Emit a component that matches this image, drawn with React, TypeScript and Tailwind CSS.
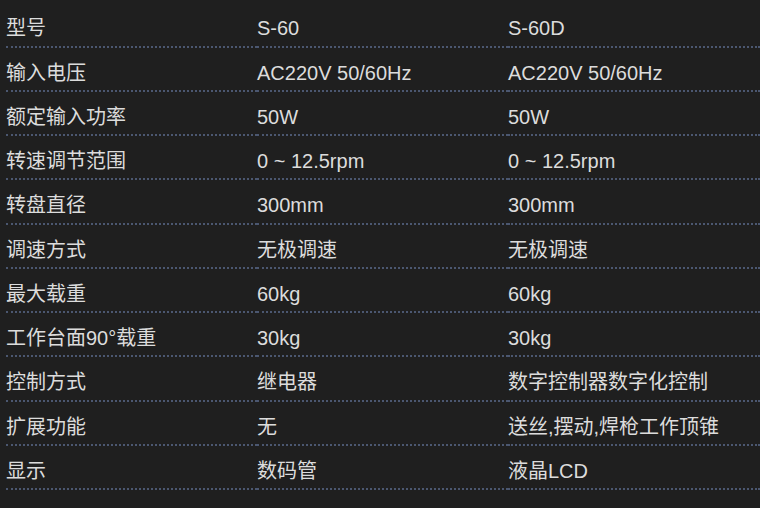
const rows: [string, string, string][] = [
  ['型号', 'S-60', 'S-60D'],
  ['输入电压', 'AC220V 50/60Hz', 'AC220V 50/60Hz'],
  ['额定输入功率', '50W', '50W'],
  ['转速调节范围', '0 ~ 12.5rpm', '0 ~ 12.5rpm'],
  ['转盘直径', '300mm', '300mm'],
  ['调速方式', '无极调速', '无极调速'],
  ['最大载重', '60kg', '60kg'],
  ['工作台面90°载重', '30kg', '30kg'],
  ['控制方式', '继电器', '数字控制器数字化控制'],
  ['扩展功能', '无', '送丝,摆动,焊枪工作顶锥'],
  ['显示', '数码管', '液晶LCD'],
]

export default function App() {
  return (
    <div className="w-[760px] h-[508px] overflow-hidden bg-[#1f1f1f] pt-[3.25px] pl-[6px] font-['Liberation_Sans','Noto_Sans_CJK_SC',sans-serif] text-[20px] leading-[23px] text-[#dcdcdc]">
      {rows.map((row, i) => (
        <div key={i} className="grid grid-cols-[251px_251px_1fr]">
          {row.map((cell, j) => (
            <div
              key={j}
              className="h-[44.25px] pt-[14px] border-b-2 border-dotted border-[#4b5770] whitespace-nowrap"
            >
              {cell}
            </div>
          ))}
        </div>
      ))}
    </div>
  )
}
